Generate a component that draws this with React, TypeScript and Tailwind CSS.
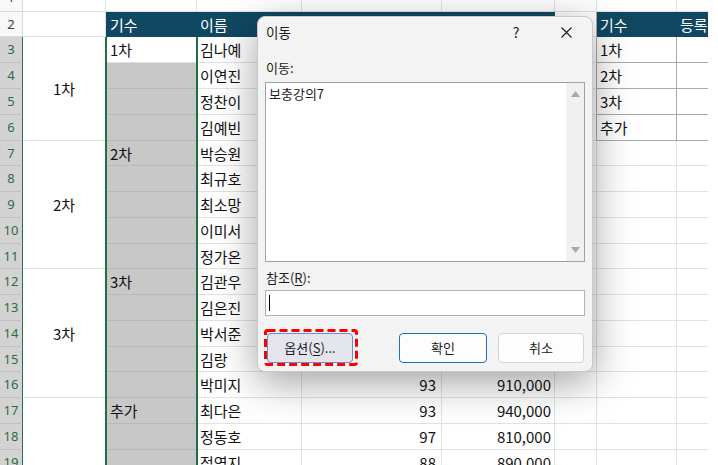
import React from "react";

const KR = "font-['Noto_Sans_CJK_KR','Noto_Sans',sans-serif]";
const GRID = "border-r border-b border-[#e1e1e1]";

type Row = {
  n: number;
  b?: { text: string; span: string };
  c?: string;
  d?: string;
  e?: string;
  f?: string;
  h?: string;
};

const rows: Row[] = [
  { n: 3, b: { text: "1차", span: "row-span-4" }, c: "1차", d: "김나예", h: "1차" },
  { n: 4, d: "이연진", h: "2차" },
  { n: 5, d: "정찬이", h: "3차" },
  { n: 6, d: "김예빈", h: "추가" },
  { n: 7, b: { text: "2차", span: "row-span-5" }, c: "2차", d: "박승원" },
  { n: 8, d: "최규호" },
  { n: 9, d: "최소망" },
  { n: 10, d: "이미서" },
  { n: 11, d: "정가온" },
  { n: 12, b: { text: "3차", span: "row-span-5" }, c: "3차", d: "김관우" },
  { n: 13, d: "김은진" },
  { n: 14, d: "박서준" },
  { n: 15, d: "김랑" },
  { n: 16, d: "박미지", e: "93", f: "910,000" },
  { n: 17, b: { text: "", span: "row-span-3" }, c: "추가", d: "최다은", e: "93", f: "940,000" },
  { n: 18, d: "정동호", e: "97", f: "810,000" },
  { n: 19, d: "정영지", e: "88", f: "890,000" },
];

function RowHead({ n, selected }: { n: number; selected: boolean }) {
  return (
    <div
      className={
        selected
          ? "flex items-center justify-center border-r border-b border-b-[#c2c2c2] border-r-[#217346] bg-[#d3d3d3] text-[13px] text-[#2e6b46] font-['Noto_Sans',sans-serif]"
          : "flex items-center justify-center border-r border-b border-[#d9d9d9] bg-[#f8f8f8] text-[13px] text-[#444] font-['Noto_Sans',sans-serif]"
      }
    >
      {n}
    </div>
  );
}

function Sheet() {
  return (
    <div
      className={`grid w-[708px] grid-cols-[23px_83px_91px_105px_140px_113px_42px_80px_31px] grid-rows-[12px_25px_26px_26px_26px_26px_25px_26px_26px_26px_25px_26px_26px_26px_25px_26px_26px_26px_26px] text-[15px] leading-none text-[#111] ${KR}`}
    >
      {/* row 1 (cut at top) */}
      <div className="overflow-hidden border-r border-b border-[#d9d9d9] bg-[#f8f8f8]">
        <div className="-mt-[16px] flex h-[26px] items-center justify-center text-[13px] text-[#444] font-['Noto_Sans',sans-serif]">
          1
        </div>
      </div>
      <div className={GRID} />
      <div className={GRID} />
      <div className={GRID} />
      <div className={GRID} />
      <div className={GRID} />
      <div className={GRID} />
      <div className={GRID} />
      <div className="border-b border-[#e1e1e1]" />

      {/* row 2 header */}
      <RowHead n={2} selected={false} />
      <div className={GRID} />
      <div className="flex items-center bg-[#104862] pl-[4px] text-white">기수</div>
      <div className="flex items-center bg-[#104862] pl-[3px] text-white">이름</div>
      <div className="bg-[#104862]" />
      <div className="bg-[#104862]" />
      <div className="border-r border-b border-[#e1e1e1] border-r-[#a9a9a9]" />
      <div className="flex items-center bg-[#104862] pl-[3px] text-white">기수</div>
      <div className="flex items-center overflow-hidden whitespace-nowrap bg-[#104862] pl-[3px] text-white">
        등록
      </div>

      {rows.map((r) => {
        const inTable = r.n <= 6;
        return (
          <React.Fragment key={r.n}>
            <RowHead n={r.n} selected />
            {r.b && (
              <div className={`${r.b.span} flex items-center justify-center ${GRID} bg-white`}>
                {r.b.text}
              </div>
            )}
            <div
              className={
                r.n === 3
                  ? "flex items-center border-b border-[#e1e1e1] bg-white pl-[4px]"
                  : "flex items-center border-b border-[#b9b9b9] bg-[#c8c8c8] pl-[4px]"
              }
            >
              {r.c}
            </div>
            <div className={`flex items-center ${GRID} bg-white pl-[3px]`}>{r.d}</div>
            <div className={`flex items-center justify-end ${GRID} pr-[5px]`}>{r.e}</div>
            <div className={`flex items-center justify-end ${GRID} pr-[3px]`}>{r.f}</div>
            <div
              className={
                inTable
                  ? "border-r border-b border-[#e1e1e1] border-r-[#a9a9a9]"
                  : GRID
              }
            />
            <div
              className={
                inTable
                  ? "flex items-center border-r border-b border-[#a9a9a9] pl-[3px]"
                  : GRID
              }
            >
              {r.h}
            </div>
            <div
              className={
                inTable ? "border-b border-[#a9a9a9]" : "border-b border-[#e1e1e1]"
              }
            />
          </React.Fragment>
        );
      })}
    </div>
  );
}

function GoToDialog() {
  return (
    <div
      className={`absolute left-[257px] top-[16px] flex h-[356px] w-[336px] flex-col rounded-[8px] border border-[#c9c9c9] bg-[#f3f3f3] px-[7px] text-[13px] leading-[18px] text-[#1b1b1b] shadow-[0_10px_40px_rgba(0,0,0,0.38)] ${KR}`}
    >
      {/* title bar */}
      <div className="-mx-[7px] flex h-[30px] items-center pl-[8px] pr-[3px]">
        <span className="flex-1 text-[13.5px]">이동</span>
        <span className="mr-[4px] flex w-[46px] justify-center text-[14px]">?</span>
        <span className="flex w-[46px] justify-center">
          <svg width="11" height="11" viewBox="0 0 11 11">
            <path d="M0.5 0.5 L10.5 10.5 M10.5 0.5 L0.5 10.5" stroke="#1b1b1b" strokeWidth="1.1" />
          </svg>
        </span>
      </div>

      <div className="mt-[12px] pl-[1px]">이동:</div>

      {/* list box */}
      <div className="mt-[5px] flex h-[180px] border border-[#a3a3a3] bg-white">
        <div className="flex-1 pl-[3px] pt-[2px]">보충강의7</div>
        <div className="flex w-[18px] flex-col items-center justify-between bg-[#f0f0f0] py-[8px]">
          <svg width="9" height="6" viewBox="0 0 9 6">
            <polygon points="4.5,0 9,6 0,6" fill="#a8a8a8" />
          </svg>
          <svg width="9" height="6" viewBox="0 0 9 6">
            <polygon points="0,0 9,0 4.5,6" fill="#a8a8a8" />
          </svg>
        </div>
      </div>

      <div className="mt-[7px] pl-[1px]">
        참조(<span className="underline underline-offset-2">R</span>):
      </div>

      {/* reference input */}
      <div className="mt-[3px] flex h-[26px] items-center border border-[#b3b3b3] bg-white pl-[3px]">
        <div className="h-[16px] w-px bg-black" />
      </div>

      {/* buttons */}
      <div className="mt-[13px] flex items-start">
        <div className="relative -ml-[1px] h-[37px] w-[94px] pl-[3px] pt-[4px]">
          <div className="flex h-[30px] w-[86px] items-center justify-center rounded-[4px] border border-[#5a93d0] bg-[#e5e5ee]">
            옵션(<span className="underline underline-offset-2">S</span>)...
          </div>
          <svg className="absolute inset-0" width="94" height="37" viewBox="0 0 94 37">
            <rect
              x="1.5"
              y="1.5"
              width="91"
              height="34"
              rx="2"
              fill="none"
              stroke="#ff0000"
              strokeWidth="3"
              strokeDasharray="8 4"
            />
          </svg>
        </div>
        <div className="ml-[41px] mt-[4px] flex h-[30px] w-[88px] items-center justify-center rounded-[4px] border border-[#1f6fc0] bg-[#fdfdfd]">
          확인
        </div>
        <div className="ml-[11px] mt-[4px] flex h-[30px] w-[86px] items-center justify-center rounded-[4px] border border-[#d3d3d3] bg-[#fdfdfd]">
          취소
        </div>
      </div>
    </div>
  );
}

export default function App() {
  return (
    <div className="relative h-[465px] w-[718px] overflow-hidden bg-white">
      <Sheet />
      {/* selection outline */}
      <div className="absolute left-[105px] top-[37px] h-[440px] w-[93px] border-x-2 border-[#1e7145]" />
      <GoToDialog />
    </div>
  );
}
